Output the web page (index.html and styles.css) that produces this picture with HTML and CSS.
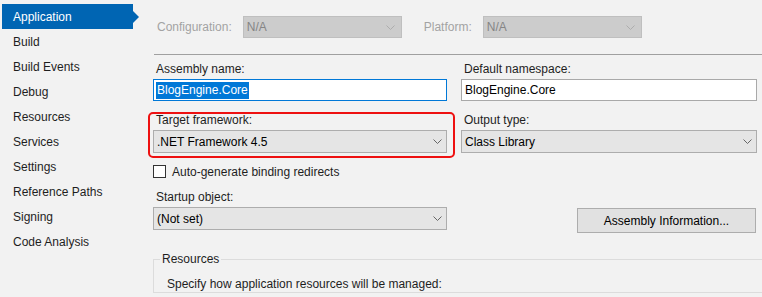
FILE: index.html
```html
<!DOCTYPE html>
<html lang="en">
<head>
  <meta charset="UTF-8">
  <title>Project Properties</title>
  <link rel="stylesheet" href="styles.css">
</head>
<body>

  <div class="page">
    <nav class="sidebar">
      <div class="nav-item active">Application</div>
      <div class="nav-item">Build</div>
      <div class="nav-item">Build Events</div>
      <div class="nav-item">Debug</div>
      <div class="nav-item">Resources</div>
      <div class="nav-item">Services</div>
      <div class="nav-item">Settings</div>
      <div class="nav-item">Reference Paths</div>
      <div class="nav-item">Signing</div>
      <div class="nav-item">Code Analysis</div>
    </nav>

    <main class="content">
      <div class="toolbar">
        <span class="dim-label config-label">Configuration:</span>
        <div class="dropdown disabled">
          <span>N/A</span>
          <svg class="chevron" width="9" height="5" viewBox="0 0 9 5"><polyline points="0.5,0.5 4.5,4.5 8.5,0.5" /></svg>
        </div>
        <span class="dim-label platform-label">Platform:</span>
        <div class="dropdown disabled">
          <span>N/A</span>
          <svg class="chevron" width="9" height="5" viewBox="0 0 9 5"><polyline points="0.5,0.5 4.5,4.5 8.5,0.5" /></svg>
        </div>
      </div>

      <div class="separator"></div>

      <div class="form-grid">
        <div class="field">
          <label>Assembly name:</label>
          <div class="textbox focused"><span class="selected">BlogEngine.Core</span></div>
        </div>
        <div class="field">
          <label>Default namespace:</label>
          <div class="textbox">BlogEngine.Core</div>
        </div>

        <div class="field marked">
          <label>Target framework:</label>
          <div class="dropdown select">
            <span>.NET Framework 4.5</span>
            <svg class="chevron" width="9" height="5" viewBox="0 0 9 5"><polyline points="0.5,0.5 4.5,4.5 8.5,0.5" /></svg>
          </div>
          <div class="highlight"></div>
        </div>
        <div class="field">
          <label>Output type:</label>
          <div class="dropdown select">
            <span>Class Library</span>
            <svg class="chevron" width="9" height="5" viewBox="0 0 9 5"><polyline points="0.5,0.5 4.5,4.5 8.5,0.5" /></svg>
          </div>
        </div>

        <div class="check-row">
          <span class="checkbox"></span>
          <span>Auto-generate binding redirects</span>
        </div>

        <div class="field startup">
          <label>Startup object:</label>
          <div class="dropdown select">
            <span>(Not set)</span>
            <svg class="chevron" width="9" height="5" viewBox="0 0 9 5"><polyline points="0.5,0.5 4.5,4.5 8.5,0.5" /></svg>
          </div>
        </div>
        <button class="info-button">Assembly Information...</button>
      </div>

      <fieldset class="group">
        <legend>Resources</legend>
        <p>Specify how application resources will be managed:</p>
      </fieldset>
    </main>
  </div>

</body>
</html>
```

FILE: styles.css
```css
body {
  margin: 0;
  background-color: #f2f2f2;
  font-family: "Liberation Sans", Arial, sans-serif;
  font-size: 12px;
  color: #1e1e1e;
  overflow: hidden;
}
.page {
  display: flex;
  height: 297px;
}
.sidebar {
  display: flex;
  flex-direction: column;
  flex: none;
  width: 140px;
  padding-top: 4px;
}
.nav-item {
  position: relative;
  box-sizing: border-box;
  width: 131px;
  height: 25px;
  margin-left: 2px;
  padding: 1px 0 0 11px;
  line-height: 25px;
}
.nav-item.active {
  background-color: #0065b3;
  color: #fff;
}
.nav-item.active::after {
  content: "";
  position: absolute;
  left: 100%;
  top: 7px;
  border-left: 6px solid #0065b3;
  border-top: 6px solid transparent;
  border-bottom: 6px solid transparent;
}
.content {
  flex: 1;
  padding-left: 13px;
}
.toolbar {
  display: flex;
  align-items: center;
  padding-top: 16px;
}
.dim-label {
  color: #a3a3a3;
  margin-right: 11px;
}
.config-label {
  margin-left: 4px;
}
.platform-label {
  margin-left: 22px;
}
.dropdown {
  display: flex;
  align-items: center;
  justify-content: space-between;
  box-sizing: border-box;
  padding: 0 6px 0 3px;
  border: 1px solid #adadad;
}
.dropdown.disabled {
  width: 159px;
  height: 22px;
  background-color: #cccccc;
  border-color: #bfbfbf;
  color: #858585;
}
.chevron polyline {
  fill: none;
  stroke: #666;
  stroke-width: 1;
}
.disabled .chevron polyline {
  stroke: #adadad;
}
.separator {
  height: 1px;
  margin: 16px 0 0 1px;
  background-color: #a0a0a0;
}
.form-grid {
  display: grid;
  grid-template-columns: 294px 296px;
  column-gap: 14px;
  row-gap: 11px;
  margin-top: 6px;
}
.field {
  position: relative;
  display: flex;
  flex-direction: column;
}
.field label {
  padding-left: 3px;
  line-height: 16px;
  margin-bottom: 2px;
}
.textbox {
  box-sizing: border-box;
  height: 22px;
  padding: 0 3px;
  line-height: 20px;
  background-color: #fff;
  border: 1px solid #a9a9a9;
  color: #000;
}
.textbox.focused {
  border-color: #0078d7;
}
.selected {
  margin-left: -1px;
  padding: 1px 1px 2px;
  background-color: #0078d7;
  color: #fff;
}
.select {
  height: 23px;
  padding-right: 4px;
  background-color: #e5e5e5;
  color: #000;
}
.highlight {
  position: absolute;
  top: 0;
  left: -5px;
  right: -8px;
  bottom: -5px;
  border: 2px solid #ee1111;
  border-radius: 5px;
  pointer-events: none;
}
.check-row {
  grid-column: 1;
  display: flex;
  align-items: center;
  height: 13px;
  margin-top: 1px;
}
.checkbox {
  box-sizing: border-box;
  width: 13px;
  height: 13px;
  margin-right: 6px;
  background-color: #fff;
  border: 1px solid #333;
}
.startup {
  grid-column: 1;
}
.info-button {
  grid-column: 2;
  align-self: start;
  justify-self: end;
  width: 179px;
  height: 25px;
  margin: 19px 1px 0 0;
  font-family: inherit;
  font-size: 12px;
  color: #000;
  background-color: #e1e1e1;
  border: 1px solid #adadad;
}
.group {
  margin: 18px -10px 0 0;
  padding: 0 0 0 6px;
  border: 1px solid #dcdcdc;
}
.group legend {
  padding: 0 2px;
  line-height: 16px;
}
.group p {
  margin: 9px 0 0 7px;
  line-height: 16px;
}
```
